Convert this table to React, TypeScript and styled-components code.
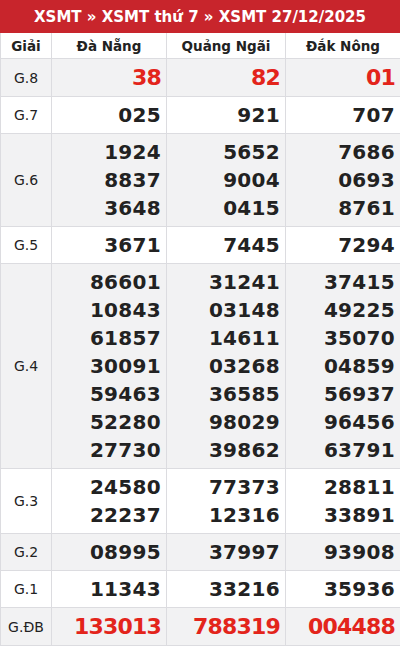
import React from 'react';
import styled, { createGlobalStyle } from 'styled-components';

const GlobalStyle = createGlobalStyle`
  html, body {
    margin: 0;
    padding: 0;
    background: #fff;
    font-family: "DejaVu Sans", "Liberation Sans", sans-serif;
  }
`;

interface Prize {
  label: string;
  values: string[][];
  red?: boolean;
}

const provinces = ['Đà Nẵng', 'Quảng Ngãi', 'Đắk Nông'];

const prizes: Prize[] = [
  { label: 'G.8', values: [['38'], ['82'], ['01']], red: true },
  { label: 'G.7', values: [['025'], ['921'], ['707']] },
  { label: 'G.6', values: [['1924', '8837', '3648'], ['5652', '9004', '0415'], ['7686', '0693', '8761']] },
  { label: 'G.5', values: [['3671'], ['7445'], ['7294']] },
  {
    label: 'G.4',
    values: [
      ['86601', '10843', '61857', '30091', '59463', '52280', '27730'],
      ['31241', '03148', '14611', '03268', '36585', '98029', '39862'],
      ['37415', '49225', '35070', '04859', '56937', '96456', '63791'],
    ],
  },
  { label: 'G.3', values: [['24580', '22237'], ['77373', '12316'], ['28811', '33891']] },
  { label: 'G.2', values: [['08995'], ['37997'], ['93908']] },
  { label: 'G.1', values: [['11343'], ['33216'], ['35936']] },
  { label: 'G.ĐB', values: [['133013'], ['788319'], ['004488']], red: true },
];

const Wrapper = styled.div`
  width: 400px;
`;

const Title = styled.div`
  height: 33px;
  background: #c8252c;
  color: #fff;
  font-size: 15px;
  font-weight: bold;
  display: flex;
  align-items: center;
  justify-content: center;
`;

const Table = styled.table`
  width: 400px;
  border-collapse: collapse;
  table-layout: fixed;
`;

const HeadCell = styled.th`
  height: 25px;
  padding: 0;
  border: 1px solid #dcdce0;
  border-top: none;
  font-size: 13.5px;
  font-weight: bold;
  color: #222;
  text-align: center;
`;

const Row = styled.tr<{ $shaded: boolean }>`
  background: ${({ $shaded }) => ($shaded ? '#f2f2f3' : '#fff')};
`;

const LabelCell = styled.td`
  border: 1px solid #dcdce0;
  padding: 0;
  font-size: 14px;
  color: #222;
  text-align: center;
`;

const NumberCell = styled.td`
  border: 1px solid #dcdce0;
  padding: 4px 5px 4px 0;
  text-align: right;
  vertical-align: middle;
`;

const Number = styled.div<{ $red?: boolean }>`
  font-size: ${({ $red }) => ($red ? '22px' : '20px')};
  line-height: ${({ $red }) => ($red ? '29px' : '28px')};
  font-weight: bold;
  letter-spacing: ${({ $red }) => ($red ? '-0.8px' : '0.3px')};
  color: ${({ $red }) => ($red ? '#e3241b' : '#222')};
`;

export default function App() {
  return (
    <Wrapper>
      <GlobalStyle />
      <Title>XSMT » XSMT thứ 7 » XSMT 27/12/2025</Title>
      <Table>
        <colgroup>
          <col style={{ width: 51 }} />
          <col style={{ width: 115 }} />
          <col style={{ width: 119 }} />
          <col style={{ width: 115 }} />
        </colgroup>
        <thead>
          <tr>
            <HeadCell>Giải</HeadCell>
            {provinces.map((p) => (
              <HeadCell key={p}>{p}</HeadCell>
            ))}
          </tr>
        </thead>
        <tbody>
          {prizes.map((prize, i) => (
            <Row key={prize.label} $shaded={i % 2 === 0}>
              <LabelCell>{prize.label}</LabelCell>
              {prize.values.map((col, j) => (
                <NumberCell key={j}>
                  {col.map((n, k) => (
                    <Number key={k} $red={prize.red}>{n}</Number>
                  ))}
                </NumberCell>
              ))}
            </Row>
          ))}
        </tbody>
      </Table>
    </Wrapper>
  );
}
